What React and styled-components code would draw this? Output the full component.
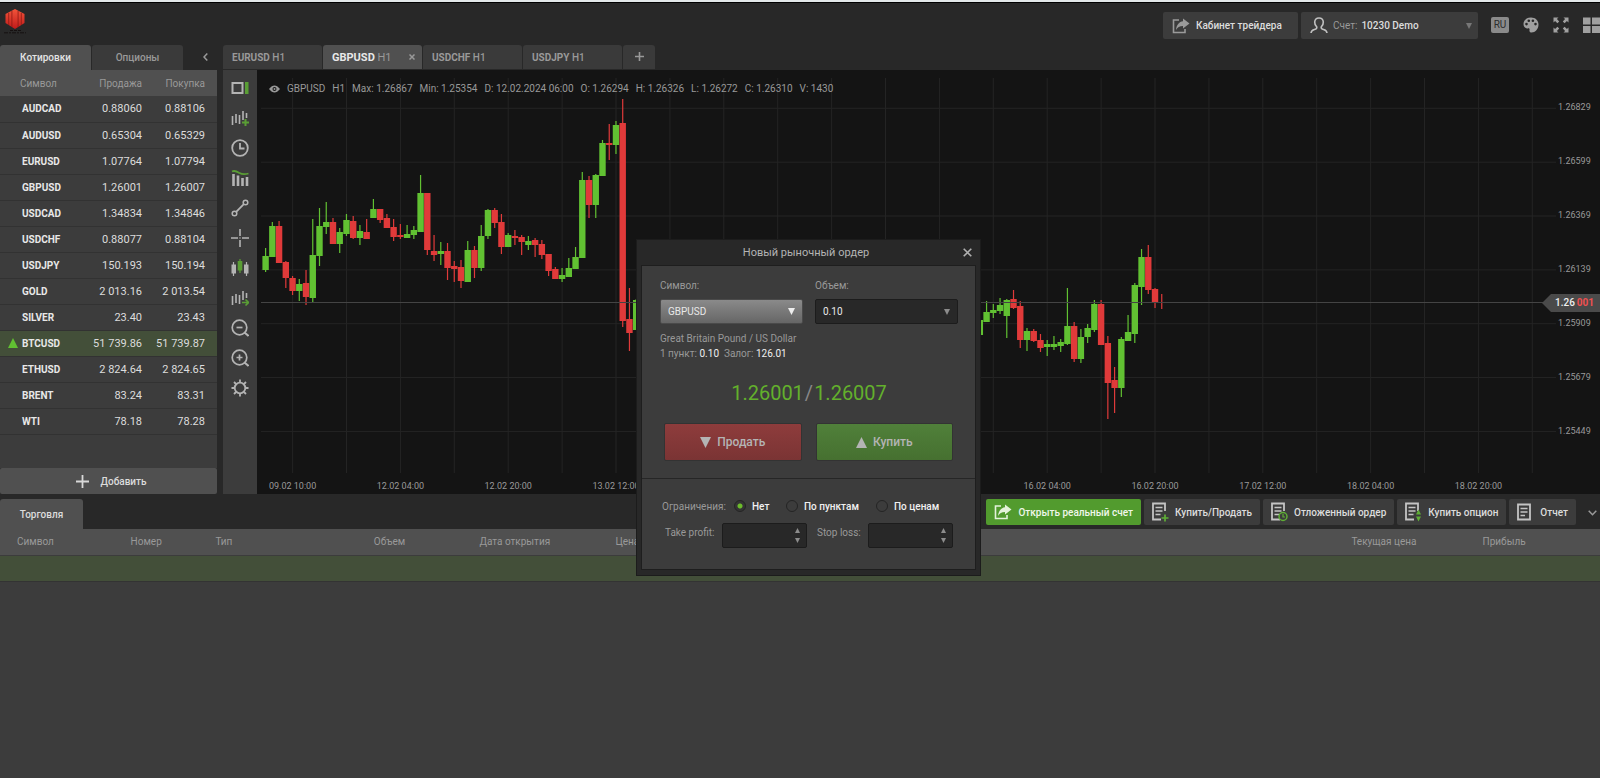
import React, { useState } from "react";
import styled, { createGlobalStyle } from "styled-components";

const QUOTES = [
  ["AUDCAD", "0.88060", "0.88106"],
  ["AUDUSD", "0.65304", "0.65329"],
  ["EURUSD", "1.07764", "1.07794"],
  ["GBPUSD", "1.26001", "1.26007"],
  ["USDCAD", "1.34834", "1.34846"],
  ["USDCHF", "0.88077", "0.88104"],
  ["USDJPY", "150.193", "150.194"],
  ["GOLD", "2 013.16", "2 013.54"],
  ["SILVER", "23.40", "23.43"],
  ["BTCUSD", "51 739.86", "51 739.87"],
  ["ETHUSD", "2 824.64", "2 824.65"],
  ["BRENT", "83.24", "83.31"],
  ["WTI", "78.18", "78.28"],
];

const CHART_TABS = ["EURUSD", "GBPUSD", "USDCHF", "USDJPY"];

const CHART_INFO = [
  "GBPUSD",
  "H1",
  "Max: 1.26867",
  "Min: 1.25354",
  "D: 12.02.2024 06:00",
  "O: 1.26294",
  "H: 1.26326",
  "L: 1.26272",
  "C: 1.26310",
  "V: 1430",
];

const PRICES = ["1.26829", "1.26599", "1.26369", "1.26139", "1.25909", "1.25679", "1.25449"];

const TIMES = [
  "09.02 10:00", "12.02 04:00", "12.02 20:00", "13.02 12:00", "14.02 04:00", "14.02 20:00",
  "15.02 12:00", "16.02 04:00", "16.02 20:00", "17.02 12:00", "18.02 04:00", "18.02 20:00",
];

// bar number, direction, high, body top, body bottom, low
const CANDLES = [
  [0, "g", 178, 186, 200, 202], [1, "g", 152, 156, 187, 187], [2, "r", 151, 156, 193, 193],
  [3, "r", 191, 192, 208, 218], [4, "r", 206, 208, 221, 225], [5, "g", 209, 214, 221, 231],
  [6, "r", 200, 213, 227, 235], [7, "g", 149, 185, 228, 232], [8, "g", 138, 156, 186, 196],
  [9, "g", 132, 152, 157, 164], [10, "r", 148, 152, 174, 174], [11, "g", 158, 162, 174, 183],
  [12, "g", 144, 150, 164, 166], [13, "r", 146, 151, 168, 169], [14, "g", 155, 161, 168, 175],
  [15, "r", 149, 162, 169, 169], [16, "g", 129, 139, 148, 148], [17, "r", 139, 139, 150, 153],
  [18, "r", 144, 148, 158, 158], [19, "r", 149, 157, 167, 171], [20, "r", 154, 165, 167, 169],
  [21, "g", 155, 164, 168, 168], [22, "g", 156, 160, 165, 169], [23, "g", 105, 123, 162, 162],
  [24, "r", 123, 123, 180, 185], [25, "r", 165, 181, 185, 191], [26, "g", 172, 181, 184, 195],
  [27, "r", 173, 181, 198, 210], [28, "r", 191, 196, 199, 212], [29, "r", 190, 197, 211, 218],
  [30, "g", 171, 180, 212, 212], [31, "r", 176, 180, 198, 208], [32, "g", 155, 166, 198, 201],
  [33, "g", 139, 140, 166, 169], [34, "r", 138, 140, 153, 158], [35, "r", 144, 152, 177, 184],
  [36, "g", 163, 165, 177, 177], [37, "r", 160, 166, 168, 175], [38, "r", 165, 167, 172, 185],
  [39, "g", 166, 171, 175, 180], [40, "r", 168, 170, 175, 187], [41, "r", 170, 174, 185, 189],
  [42, "r", 184, 184, 201, 206], [43, "r", 197, 199, 209, 209], [44, "g", 198, 205, 209, 212],
  [45, "g", 188, 198, 207, 207], [46, "g", 177, 187, 199, 199], [47, "g", 102, 110, 188, 188],
  [48, "r", 106, 110, 135, 148], [49, "g", 104, 105, 135, 148], [50, "g", 70, 73, 106, 106],
  [51, "r", 54, 73, 75, 90], [52, "g", 51, 55, 75, 84], [53, "r", 29, 53, 251, 257],
  [54, "r", 218, 249, 263, 281], [55, "g", 229, 230, 260, 260],
  [106, "g", 250, 250, 265, 265], [107, "g", 231, 242, 252, 252], [108, "g", 234, 240, 243, 248],
  [109, "g", 228, 235, 241, 244], [110, "g", 229, 230, 246, 268], [111, "r", 220, 229, 238, 239],
  [112, "r", 231, 236, 270, 278], [113, "g", 258, 261, 270, 281], [114, "r", 259, 261, 271, 272],
  [115, "r", 264, 270, 278, 282], [116, "g", 270, 274, 277, 286], [117, "g", 266, 274, 277, 280],
  [118, "g", 269, 272, 276, 282], [119, "g", 218, 256, 274, 275], [120, "r", 252, 256, 289, 292],
  [121, "g", 259, 267, 289, 293], [122, "g", 254, 258, 267, 273], [123, "g", 230, 234, 260, 262],
  [124, "r", 230, 234, 275, 275], [125, "r", 266, 273, 313, 349], [126, "r", 297, 310, 318, 343],
  [127, "g", 267, 269, 318, 327], [128, "g", 245, 262, 271, 271], [129, "g", 213, 215, 264, 273],
  [130, "g", 179, 187, 217, 235], [131, "r", 175, 187, 220, 224], [132, "r", 218, 219, 232, 238],
  [133, "r", 224, 232, 232, 239],
];

const BAR_STEP = 6.738;
const FIRST_BAR = 8.6;
const GRID_X = 35.6;
const GRID_STEP = 53.9;

const TOOLS = [
  ["Панель", <><rect x="1.5" y="4" width="10" height="10" stroke="#b4b4b4" strokeWidth="2" fill="none" /><rect x="14" y="3" width="3.5" height="12" fill="#5a9e35" /></>],
  ["Новый график", <><path d="M1.5 7v9M5 5v9M8.500 6v9M12 2v9M15.500 4v5" stroke="#b4b4b4" strokeWidth="1.6" /><path d="M14.500 10v7M11 13.500h7" stroke="#5a9e35" strokeWidth="2" /></>],
  ["Период", <><circle cx="9" cy="9" r="7.8" stroke="#b4b4b4" strokeWidth="1.8" fill="none" /><path d="M9 4v5.500h4.500" stroke="#b4b4b4" strokeWidth="1.8" fill="none" /></>],
  ["Индикаторы", <><path d="M2.500 5v12M7 6.500v10.500M11.500 9v8M16 8v9" stroke="#b4b4b4" strokeWidth="2.6" /><path d="M1 2.500c3-1.500 5 0 7.500 1.500S14 5.500 17.500 4.500" stroke="#5a9e35" strokeWidth="1.8" fill="none" /></>],
  ["Линия", <><circle cx="14.500" cy="3.500" r="2.300" stroke="#b4b4b4" strokeWidth="1.500" fill="none" /><circle cx="3.500" cy="14.500" r="2.300" stroke="#b4b4b4" strokeWidth="1.500" fill="none" /><path d="M5.200 12.800 12.800 5.200" stroke="#b4b4b4" strokeWidth="1.800" /></>],
  ["Перекрестие", <path d="M9 0v7M9 11v7M0 9h7M11 9h7M8.500 9h1" stroke="#b4b4b4" strokeWidth="1.600" />],
  ["Тип графика", <><path d="M2.500 3v14M15.500 3v14" stroke="#b4b4b4" strokeWidth="1.200" /><rect x="0.500" y="5.500" width="4.500" height="9" fill="#b4b4b4" /><rect x="13" y="5.500" width="4.500" height="9" fill="#b4b4b4" /><path d="M9 0v14" stroke="#5a9e35" strokeWidth="1.200" /><rect x="6.700" y="2" width="4.600" height="9.500" fill="#5a9e35" /></>],
  ["Сдвиг графика", <><path d="M1.500 7v9M5 5v9M8.500 6v9M12 2v9M15.500 4v5" stroke="#b4b4b4" strokeWidth="1.600" /><path d="M11 13.500h5.500M14.500 10.500l3 3-3 3" stroke="#5a9e35" strokeWidth="1.600" fill="none" /></>],
  ["Уменьшить", <><circle cx="8.500" cy="8.500" r="7.300" stroke="#b4b4b4" strokeWidth="1.700" fill="none" /><path d="M5.500 8.500h6" stroke="#b4b4b4" strokeWidth="1.700" /><path d="M13.500 13.500 17.500 17" stroke="#b4b4b4" strokeWidth="2" /></>],
  ["Увеличить", <><circle cx="8.500" cy="8.500" r="7.300" stroke="#b4b4b4" strokeWidth="1.700" fill="none" /><path d="M5.500 8.500h6M8.500 5.500v6" stroke="#b4b4b4" strokeWidth="1.700" /><path d="M13.500 13.500 17.500 17" stroke="#b4b4b4" strokeWidth="2" /></>],
  ["Настройки", <><circle cx="9" cy="9" r="5.300" stroke="#b4b4b4" strokeWidth="1.800" fill="none" /><path d="M9 .5v3M9 14.500v3M.5 9h3M14.500 9h3M3 3l2 2M13 13l2 2M15 3l-2 2M5 13l-2 2" stroke="#b4b4b4" strokeWidth="1.800" /></>],
];

const Logo = () => (
  <svg width="24" height="26" viewBox="0 0 24 26" aria-hidden="true">
    <defs>
      <linearGradient id="logoRed" x1="0" y1="0" x2="0" y2="1">
        <stop offset="0" stopColor="#f2543a" />
        <stop offset="1" stopColor="#c01a1a" />
      </linearGradient>
    </defs>
    <path d="M12 0 21.500 5v9L12 20 2.500 14V5z" fill="url(#logoRed)" />
    <path d="M5.700 4v12M8.900 2v16M15.100 2v16M18.300 4v12" stroke="#8d1a14" strokeWidth="0.800" />
    <path d="M7 21.500h11" stroke="#151010" strokeWidth="1" strokeDasharray="3 1" />
    <path d="M1 23.800h22" stroke="#151010" strokeWidth="1" strokeDasharray="4 1 2 1" />
  </svg>
);

const ShareIcon = ({ color = "#9a9a9a" }) => (
  <svg width="18" height="16" viewBox="0 0 18 16" aria-hidden="true">
    <path d="M7 2H1.500v12.500H13V11" stroke={color} strokeWidth="1.600" fill="none" />
    <path d="M11 .5 17.500 5.500 11 10.500V8C7.500 8 5.500 9.500 4 12 4.500 7 7 3.800 11 3.300z" fill={color} />
  </svg>
);

const UserIcon = () => (
  <svg width="18" height="17" viewBox="0 0 18 17" aria-hidden="true">
    <path
      d="M1 16c.3-2.300 1.500-3 3.500-3.500 2-.5 2.500-1.300 2.300-2.500C5.200 8.500 4.600 6.800 4.700 5 4.900 2.500 6.600 1 9 1s4.100 1.500 4.300 4c.1 1.800-.5 3.500-2.100 5-.2 1.200.3 2 2.300 2.500 2 .5 3.200 1.200 3.500 3.500"
      stroke="#c0c0c0" strokeWidth="1.600" fill="none"
    />
  </svg>
);

const Arrow = ({ up, size = 8, color = "#8c8c8c" }) => (
  <svg width={size} height={size} viewBox="0 0 10 10" aria-hidden="true">
    <path d={up ? "M5 0 10 10H0z" : "M0 0h10L5 10z"} fill={color} />
  </svg>
);

const SheetIcon = ({ children }) => (
  <svg width="17" height="20" viewBox="0 0 17 20" aria-hidden="true">
    <path d="M13 9V1.500H1V17.500h8" stroke="#c4c4c4" strokeWidth="1.800" fill="none" />
    <path d="M3.500 5.500h7M3.500 9h7M3.500 12.500h5" stroke="#c4c4c4" strokeWidth="1.500" />
    {children}
  </svg>
);

const Chart = () => (
  <ChartSvg role="img" aria-label="GBPUSD H1">
    {Array.from({ length: 24 }, (_, i) => {
      const x = GRID_X + i * GRID_STEP;
      return <line key={i} x1={x} x2={x} y1="8" y2="403" stroke="#242424" />;
    })}
    {PRICES.map((p, i) => {
      const y = 38.3 + i * 53.85;
      return <line key={p} x1="4" x2="100%" y1={y} y2={y} stroke="#242424" />;
    })}
    {CANDLES.map(([n, dir, high, top, bottom, low]) => {
      const x = FIRST_BAR + n * BAR_STEP;
      const color = dir === "g" ? "#61c132" : "#e03a3a";
      return (
        <g key={n} fill={color}>
          <rect x={x - 0.6} y={high} width="1.200" height={low - high} />
          <rect x={x - 3.2} y={top} width="6.400" height={bottom - top} />
        </g>
      );
    })}
    <line x1="4" x2="100%" y1="232.500" y2="232.500" stroke="#444" />
    {TIMES.map((t, i) => (
      <AxisText key={t} x={GRID_X + i * GRID_STEP * 2} y="419" textAnchor="middle">{t}</AxisText>
    ))}
  </ChartSvg>
);

const App = () => {
  const [limit, setLimit] = useState("Нет");

  return (
    <Page>
      <GlobalStyle />
      <TopBar>
        <Logo />
        <TopActions>
          <CabinetButton>
            <ShareIcon />
            Кабинет трейдера
          </CabinetButton>
          <Account>
            <UserIcon />
            <label htmlFor="account">Счет:</label>
            <AccountSelect id="account">
              <option>10230 Demo</option>
            </AccountSelect>
            <Arrow size={6} color="#777" />
          </Account>
          <IconRow>
            <LangButton>RU</LangButton>
            <IconButton aria-label="Тема">
              <svg width="16" height="16" viewBox="0 0 16 16">
                <path
                  fillRule="evenodd"
                  d="M8 .5C3.700.5.500 3.300.500 7c0 3 2.200 4.800 4.300 4.400 1.400-.3 2 .5 1.700 1.700-.3 1.500.6 2.400 2 2.400 3.700 0 7-3.500 7-8C15.500 3.300 12.300.5 8 .5zM3.500 5.800a1.300 1.300 0 1 0 0 2.600 1.300 1.300 0 0 0 0-2.600zM5.800 2.500a1.300 1.300 0 1 0 0 2.600 1.300 1.300 0 0 0 0-2.600zM9.900 2.500a1.300 1.300 0 1 0 0 2.600 1.300 1.300 0 0 0 0-2.600zM12.500 5.800a1.300 1.300 0 1 0 0 2.600 1.300 1.300 0 0 0 0-2.600z"
                  fill="#a0a0a0"
                />
              </svg>
            </IconButton>
            <IconButton aria-label="На весь экран">
              <svg width="16" height="16" viewBox="0 0 16 16">
                <path d="M.5.5h5L3.900 2.100l2.300 2.300-1.800 1.800-2.300-2.300L.5 5.500zM15.500.5v5l-1.600-1.600-2.300 2.300-1.800-1.800 2.300-2.300L10.500.5zM.5 15.500v-5l1.600 1.600 2.300-2.300 1.800 1.800-2.300 2.300 1.600 1.600zM15.500 15.500h-5l1.600-1.600-2.300-2.300 1.800-1.800 2.300 2.300 1.600-1.600z" fill="#a0a0a0" />
              </svg>
            </IconButton>
            <IconButton aria-label="Окна">
              <svg width="17" height="16" viewBox="0 0 17 16">
                <path d="M0 .5h7.500v7H0zM9 .5h8v7H9zM0 9h7.500v7H0zM9 9h8v7H9z" fill="#a0a0a0" />
              </svg>
            </IconButton>
          </IconRow>
        </TopActions>
      </TopBar>

      <Workspace>
        <QuotesPanel>
          <PanelTabs>
            <PanelTab $active>Котировки</PanelTab>
            <PanelTab>Опционы</PanelTab>
            <Collapse aria-label="Свернуть">
              <svg width="5" height="8" viewBox="0 0 5 8">
                <path d="M4.300.5 1 4l3.300 3.500" stroke="#999" strokeWidth="1.500" fill="none" />
              </svg>
            </Collapse>
          </PanelTabs>
          <QuotesBody>
            <QuotesTable>
              <colgroup>
                <col style={{ width: 22 }} />
                <col style={{ width: 50 }} />
                <col style={{ width: 70 }} />
                <col />
              </colgroup>
              <thead>
                <tr>
                  <th colSpan={2}>Символ</th>
                  <th>Продажа</th>
                  <th>Покупка</th>
                </tr>
              </thead>
              <tbody>
                {QUOTES.map(([name, bid, ask]) => (
                  <QuoteRow key={name} $up={name === "BTCUSD"}>
                    <td>{name === "BTCUSD" && <Arrow up size={10} color="#61c132" />}</td>
                    <td>{name}</td>
                    <td>{bid}</td>
                    <td>{ask}</td>
                  </QuoteRow>
                ))}
              </tbody>
            </QuotesTable>
          </QuotesBody>
          <AddButton>
            <svg width="13" height="13" viewBox="0 0 13 13">
              <path d="M6.500 0v13M0 6.500h13" stroke="#d8d8d8" strokeWidth="1.800" />
            </svg>
            Добавить
          </AddButton>
        </QuotesPanel>

        <ChartPanel>
          <ChartTabs>
            {CHART_TABS.map((name) => (
              <ChartTab key={name} $active={name === "GBPUSD"}>
                <span><b>{name}</b> H1</span>
                {name === "GBPUSD" && (
                  <svg width="6" height="6" viewBox="0 0 6 6">
                    <path d="M.5.500l5 5M5.500.500l-5 5" stroke="#999" strokeWidth="1.500" />
                  </svg>
                )}
              </ChartTab>
            ))}
            <NewTab aria-label="Новая вкладка">
              <svg width="9" height="9" viewBox="0 0 9 9">
                <path d="M4.500 0v9M0 4.500h9" stroke="#999" strokeWidth="1.600" />
              </svg>
            </NewTab>
          </ChartTabs>
          <ChartBody>
            <Toolbar>
              {TOOLS.map(([label, icon]) => (
                <ToolButton key={label} aria-label={label}>
                  <svg width="18" height="18" viewBox="0 0 18 18">{icon}</svg>
                </ToolButton>
              ))}
            </Toolbar>
            <Plot>
              <Chart />
              <PriceAxis>
                {PRICES.map((p) => <span key={p}>{p}</span>)}
                <PriceTag>1.26<b>001</b></PriceTag>
              </PriceAxis>
              <InfoLine>
                <svg width="11" height="8" viewBox="0 0 11 8">
                  <path fillRule="evenodd" d="M0 4C2 1.500 3.700.5 5.500.5S9 1.500 11 4C9 6.500 7.300 7.500 5.500 7.500S2 6.500 0 4zm5.500-2a2 2 0 1 0 0 4 2 2 0 0 0 0-4z" fill="#999" />
                  <circle cx="5.500" cy="4" r="1" fill="#999" />
                </svg>
                {CHART_INFO.map((t) => <span key={t}>{t}</span>)}
              </InfoLine>
            </Plot>
          </ChartBody>
        </ChartPanel>
      </Workspace>

      <TradeBar>
        <TradeTab>Торговля</TradeTab>
        <TradeActions>
          <TradeButton $primary>
            <ShareIcon color="#e4f2da" />
            Открыть реальный счет
          </TradeButton>
          <TradeButton>
            <SheetIcon><path d="M13 12.500v7M9.500 16h7" stroke="#5fae36" strokeWidth="1.700" /></SheetIcon>
            Купить/Продать
          </TradeButton>
          <TradeButton>
            <SheetIcon>
              <circle cx="12" cy="14.500" r="4" fill="#3c3c3c" stroke="#5fae36" strokeWidth="1.500" />
              <path d="M12 12v3h2" stroke="#5fae36" strokeWidth="1.200" fill="none" />
            </SheetIcon>
            Отложенный ордер
          </TradeButton>
          <TradeButton>
            <SheetIcon><path d="M13.500 7.500l2.500 5h-5zM11 14.500h5l-2.500 5z" fill="#5fae36" /></SheetIcon>
            Купить опцион
          </TradeButton>
          <TradeButton>
            <svg width="17" height="18" viewBox="0 0 17 18">
              <path d="M1 1.500h12v15H1z" stroke="#c4c4c4" strokeWidth="1.800" fill="none" />
              <path d="M3.500 5.500h7M3.500 9h7M3.500 12.500h4.500" stroke="#c4c4c4" strokeWidth="1.500" />
            </svg>
            Отчет
          </TradeButton>
          <Expand aria-label="Развернуть">
            <svg width="9" height="6" viewBox="0 0 9 6">
              <path d="M.7.700 4.500 4.700 8.300.700" stroke="#999" strokeWidth="1.500" fill="none" />
            </svg>
          </Expand>
        </TradeActions>
      </TradeBar>

      <TradeTable>
        <colgroup>
          {["7.1%", "5.3%", "9.9%", "6.6%", "8.5%", "46%", "8.2%", "8.4%"].map((width, i) => (
            <col key={i} style={{ width }} />
          ))}
        </colgroup>
        <thead>
          <tr>
            <th>Символ</th>
            <th>Номер</th>
            <th>Тип</th>
            <th>Объем</th>
            <th>Дата открытия</th>
            <th>Цена</th>
            <th>Текущая цена</th>
            <th>Прибыль</th>
          </tr>
        </thead>
        <tbody>
          <tr><td colSpan={8} /></tr>
        </tbody>
      </TradeTable>

      <Dialog role="dialog" aria-labelledby="order-title">
        <DialogHeader>
          <h2 id="order-title">Новый рыночный ордер</h2>
          <CloseButton aria-label="Закрыть">
            <svg width="9" height="9" viewBox="0 0 9 9">
              <path d="M.7.700l7.600 7.600M8.300.700.7 8.300" stroke="#b0b0b0" strokeWidth="1.600" />
            </svg>
          </CloseButton>
        </DialogHeader>
        <DialogBody>
          <OrderForm>
            <Fields>
              <Field>
                <label htmlFor="symbol">Символ:</label>
                <SelectBox $light>
                  <select id="symbol"><option>GBPUSD</option></select>
                  <Arrow size={7} color="#eee" />
                </SelectBox>
              </Field>
              <Field>
                <label htmlFor="volume">Объем:</label>
                <SelectBox>
                  <select id="volume"><option>0.10</option></select>
                  <Arrow size={6} />
                </SelectBox>
              </Field>
            </Fields>
            <SymbolInfo>
              <p>Great Britain Pound / US Dollar</p>
              <p>1 пункт: <b>0.10</b>&nbsp; Залог: <b>126.01</b></p>
            </SymbolInfo>
            <Rate>
              <span>1.26001</span>
              <i>/</i>
              <span>1.26007</span>
            </Rate>
            <DealButtons>
              <DealButton $sell><Arrow size={11} color="#b4b4b4" />Продать</DealButton>
              <DealButton><Arrow up size={11} color="#b4b4b4" />Купить</DealButton>
            </DealButtons>
          </OrderForm>
          <Limits>
            <RadioRow role="radiogroup" aria-labelledby="limits">
              <span id="limits">Ограничения:</span>
              {["Нет", "По пунктам", "По ценам"].map((name) => (
                <Radio key={name}>
                  <input
                    type="radio"
                    name="limit"
                    checked={limit === name}
                    onChange={() => setLimit(name)}
                  />
                  {name}
                </Radio>
              ))}
            </RadioRow>
            <StopRow>
              <label htmlFor="take">Take profit:</label>
              <Stepper>
                <input id="take" type="text" />
                <div><Arrow up size={5} /><Arrow size={5} /></div>
              </Stepper>
              <label htmlFor="stop">Stop loss:</label>
              <Stepper>
                <input id="stop" type="text" />
                <div><Arrow up size={5} /><Arrow size={5} /></div>
              </Stepper>
            </StopRow>
          </Limits>
        </DialogBody>
      </Dialog>
    </Page>
  );
};

export default App;


// Styled Components

const GlobalStyle = createGlobalStyle`
  * {
    box-sizing: border-box;
  }

  body {
    margin: 0;
    background: #3c3c3c;
    color: #dcdcdc;
    font-family: Roboto, "Liberation Sans", sans-serif;
    font-size: 10px;
  }

  button, input, select {
    font: inherit;
    color: inherit;
    border: none;
    padding: 0;
    margin: 0;
    background: none;
  }

  button {
    font-weight: 500;
  }

  select {
    appearance: none;
    outline: none;
  }

  svg {
    flex: none;
  }
`;

const Page = styled.div`
  position: relative;
  min-height: 100vh;
  overflow: hidden;
  border-top: 2px solid #e2e7e9;
`;

const TopBar = styled.header`
  display: flex;
  justify-content: space-between;
  height: 43px;
  padding: 6px 0 0 3px;
  background: #282828;
  border-top: 1px solid #000;
`;

const TopActions = styled.div`
  display: flex;
  align-items: flex-start;
  gap: 3px;
  padding-top: 3px;
`;

const CabinetButton = styled.button`
  display: flex;
  align-items: center;
  gap: 6px;
  width: 135px;
  height: 27px;
  padding-left: 9px;
  background: #3c3c3c;
  border-radius: 2px;
  white-space: nowrap;
`;

const Account = styled.div`
  display: flex;
  align-items: center;
  gap: 4px;
  width: 177px;
  height: 27px;
  padding: 0 6px 0 9px;
  background: #3c3c3c;
  border-radius: 2px;

  label {
    padding-left: 1px;
    color: #999;
  }
`;

const AccountSelect = styled.select`
  flex: 1;
  min-width: 0;
  font-weight: 500;
`;

const IconRow = styled.div`
  display: flex;
  align-items: center;
  gap: 14px;
  height: 25px;
  padding-left: 10px;
`;

const LangButton = styled.button`
  width: 18px;
  height: 16px;
  background: #8a8a8a;
  border-radius: 2px;
  color: #2c2c2c;
  font-weight: 400;
  line-height: 16px;
`;

const IconButton = styled.button`
  display: flex;
`;

const Workspace = styled.main`
  display: flex;
  gap: 6px;
  background: #282828;
`;

const QuotesPanel = styled.section`
  display: flex;
  flex-direction: column;
  flex: none;
  width: 217px;
`;

const PanelTabs = styled.div`
  display: flex;
  gap: 1px;
  height: 25px;
`;

const PanelTab = styled.button`
  width: 91px;
  background: ${(props) => (props.$active ? "#505050" : "#3a3a3a")};
  color: ${(props) => (props.$active ? "#e4e4e4" : "#999")};
  border-radius: 3px 3px 0 0;
`;

const Collapse = styled.button`
  flex: 1;
  padding-left: 10px;
`;

const QuotesBody = styled.div`
  flex: 1;
  background: #3c3c3c;
`;

const QuotesTable = styled.table`
  width: 100%;
  table-layout: fixed;
  border-collapse: collapse;

  th, td {
    height: 26px;
    padding: 0;
    text-align: right;
    white-space: nowrap;
  }

  td {
    font-size: 11px;
  }

  th {
    background: #505050;
    color: #999;
    font-weight: 400;
  }

  th:first-child {
    padding-left: 20px;
    text-align: left;
  }

  th:last-child, td:last-child {
    padding-right: 12px;
  }
`;

const QuoteRow = styled.tr`
  background: ${(props) => (props.$up ? "#434f39" : "#3c3c3c")};
  border-bottom: 1px solid #323232;

  td:first-child {
    padding: 2px 4px 0 0;
  }

  td:nth-child(2) {
    text-align: left;
    font-size: 10px;
    font-weight: 700;
    color: #e8e8e8;
  }
`;

const AddButton = styled.button`
  display: flex;
  align-items: center;
  justify-content: center;
  gap: 11px;
  height: 26px;
  padding-left: 6px;
  background: #505050;
  border-radius: 2px;
`;

const ChartPanel = styled.section`
  flex: 1;
  min-width: 0;
`;

const ChartTabs = styled.div`
  display: flex;
  gap: 1px;
  height: 25px;
  padding-bottom: 1px;
`;

const ChartTab = styled.button`
  display: flex;
  align-items: center;
  justify-content: space-between;
  width: 99px;
  padding: 0 7px 0 9px;
  background: ${(props) => (props.$active ? "#505050" : "#3a3a3a")};
  color: #999;
  font-size: ${(props) => (props.$active ? "11px" : "10px")};
  font-weight: ${(props) => (props.$active ? 400 : 500)};
  border-radius: 3px 3px 0 0;

  b {
    font-weight: 700;
    color: ${(props) => (props.$active ? "#e8e8e8" : "#999")};
  }
`;

const NewTab = styled.button`
  width: 32px;
  background: #3a3a3a;
  border-radius: 3px 3px 0 0;
`;

const ChartBody = styled.div`
  display: flex;
`;

const Toolbar = styled.div`
  display: flex;
  flex-direction: column;
  width: 34px;
  padding-top: 3px;
  background: #3c3c3c;
`;

const ToolButton = styled.button`
  display: flex;
  align-items: center;
  justify-content: center;
  height: 30px;
`;

const Plot = styled.div`
  position: relative;
  display: flex;
  flex: 1;
  min-width: 0;
  height: 424px;
  background: #141414;
`;

const ChartSvg = styled.svg`
  flex: 1;
  min-width: 0;
  height: 100%;
`;

const AxisText = styled.text`
  font-size: 9px;
  fill: #999;
`;

const PriceAxis = styled.div`
  position: relative;
  display: flex;
  flex-direction: column;
  width: 44px;
  padding: 10px 0 0 2px;
  font-size: 9px;
  color: #999;

  span {
    height: 54px;
    line-height: 54px;
  }
`;

/* sits over the axis labels at the current price */
const PriceTag = styled.div`
  position: absolute;
  top: 224px;
  right: 0;
  width: 58px;
  height: 18px;
  padding-left: 13px;
  background: #4a4a4a;
  clip-path: polygon(0 50%, 9px 0, 100% 0, 100% 100%, 9px 100%);
  color: #f0f0f0;
  font-size: 10px;
  font-weight: 500;
  line-height: 18px;

  b {
    padding-left: 2px;
    color: #f05050;
  }
`;

const InfoLine = styled.div`
  position: absolute;
  top: 12px;
  left: 12px;
  display: flex;
  align-items: center;
  gap: 7px;
  color: #999;
  line-height: 14px;
`;

const TradeBar = styled.div`
  display: flex;
  justify-content: space-between;
  height: 35px;
  padding-top: 5px;
  background: #282828;
`;

const TradeTab = styled.button`
  width: 83px;
  background: #505050;
  border-radius: 3px 3px 0 0;
`;

const TradeActions = styled.div`
  display: flex;
  gap: 3px;
  height: 26px;
`;

const TradeButton = styled.button`
  display: flex;
  align-items: center;
  gap: 6px;
  padding: 0 8px;
  background: ${(props) => (props.$primary ? "#529b2e" : "#3c3c3c")};
  color: ${(props) => (props.$primary ? "#f0f7ea" : "#dcdcdc")};
  border-radius: 2px;
  white-space: nowrap;
`;

const Expand = styled.button`
  width: 21px;
  padding-left: 5px;
`;

const TradeTable = styled.table`
  width: 100%;
  table-layout: fixed;
  border-collapse: collapse;

  th {
    height: 26px;
    padding: 0 0 0 17px;
    background: #505050;
    border-bottom: 1px solid #3c3c3c;
    color: #999;
    font-weight: 400;
    text-align: left;
  }

  td {
    height: 26px;
    padding: 0;
    background: #434f39;
    border-bottom: 1px solid #333;
  }
`;

const Dialog = styled.section`
  position: absolute;
  top: 237px;
  left: calc(50% - 164px);
  width: 345px;
  padding: 0 4px 5px;
  background: #282828;
  border: 1px solid #1c1c1c;
`;

const DialogHeader = styled.div`
  display: flex;
  align-items: center;
  height: 25px;
  padding-right: 4px;

  h2 {
    flex: 1;
    margin: 0;
    padding-left: 8px;
    font-size: 11px;
    font-weight: 400;
    color: #b4b4b4;
    text-align: center;
  }
`;

const CloseButton = styled.button`
  display: flex;
`;

const DialogBody = styled.div`
  background: #3c3c3c;
  border: 1px solid #1e1e1e;
  color: #999;
`;

const OrderForm = styled.div`
  padding: 12px 17px 17px 18px;
  border-bottom: 1px solid #262626;
`;

const Fields = styled.div`
  display: grid;
  grid-template-columns: 1fr 1fr;
  gap: 12px;
`;

const Field = styled.div`
  display: flex;
  flex-direction: column;
  gap: 6px;
  line-height: 15px;
`;

const SelectBox = styled.div`
  display: flex;
  align-items: center;
  height: 25px;
  padding: 0 7px;
  background: ${(props) => (props.$light ? "linear-gradient(#8a8a8a, #666)" : "#282828")};
  border: 1px solid ${(props) => (props.$light ? "#4a4a4a" : "#1c1c1c")};
  border-radius: 2px;
  color: #e8e8e8;

  select {
    flex: 1;
    min-width: 0;
  }
`;

const SymbolInfo = styled.div`
  margin-top: 7px;
  line-height: 15px;

  p {
    margin: 0;
  }

  b {
    font-weight: 400;
    color: #f0f0f0;
  }
`;

const Rate = styled.div`
  display: flex;
  justify-content: center;
  gap: 1px;
  margin-top: 20px;
  color: #63b02c;
  font-size: 20px;
  line-height: 24px;

  i {
    font-style: normal;
    color: #888;
  }
`;

const DealButtons = styled.div`
  display: grid;
  grid-template-columns: 1fr 1fr;
  gap: 14px;
  margin-top: 18px;
  padding: 0 5px 0 4px;
`;

const DealButton = styled.button`
  display: flex;
  align-items: center;
  justify-content: center;
  gap: 6px;
  height: 38px;
  background: ${(props) =>
    props.$sell ? "linear-gradient(#8e3c3c, #7a3434)" : "linear-gradient(#50803a, #467030)"};
  border: 1px solid #333;
  border-radius: 2px;
  color: #b4b4b4;
  font-size: 12px;
`;

const Limits = styled.div`
  padding: 18px 16px 21px 20px;
`;

const RadioRow = styled.div`
  display: grid;
  grid-template-columns: 72px 52px 90px auto;
  align-items: center;
  height: 18px;
`;

const Radio = styled.label`
  display: flex;
  align-items: center;
  gap: 6px;
  color: #f0f0f0;
  font-weight: 500;
  white-space: nowrap;

  input {
    appearance: none;
    width: 12px;
    height: 12px;
    border: 1px solid #242424;
    border-radius: 50%;
  }

  input:checked {
    background: radial-gradient(#6cbc2c 0 2px, #343434 3px);
  }
`;

const StopRow = styled.div`
  display: grid;
  grid-template-columns: 57px 95px 51px 85px;
  margin-top: 8px;
  padding-left: 3px;
  line-height: 20px;
`;

const Stepper = styled.div`
  display: flex;
  width: 85px;
  height: 25px;
  padding: 0 6px;
  background: #282828;
  border: 1px solid #1c1c1c;
  border-radius: 2px;

  input {
    flex: 1;
    min-width: 0;
    outline: none;
  }

  div {
    display: flex;
    flex-direction: column;
    justify-content: space-around;
    padding: 1px 0;
  }
`;
